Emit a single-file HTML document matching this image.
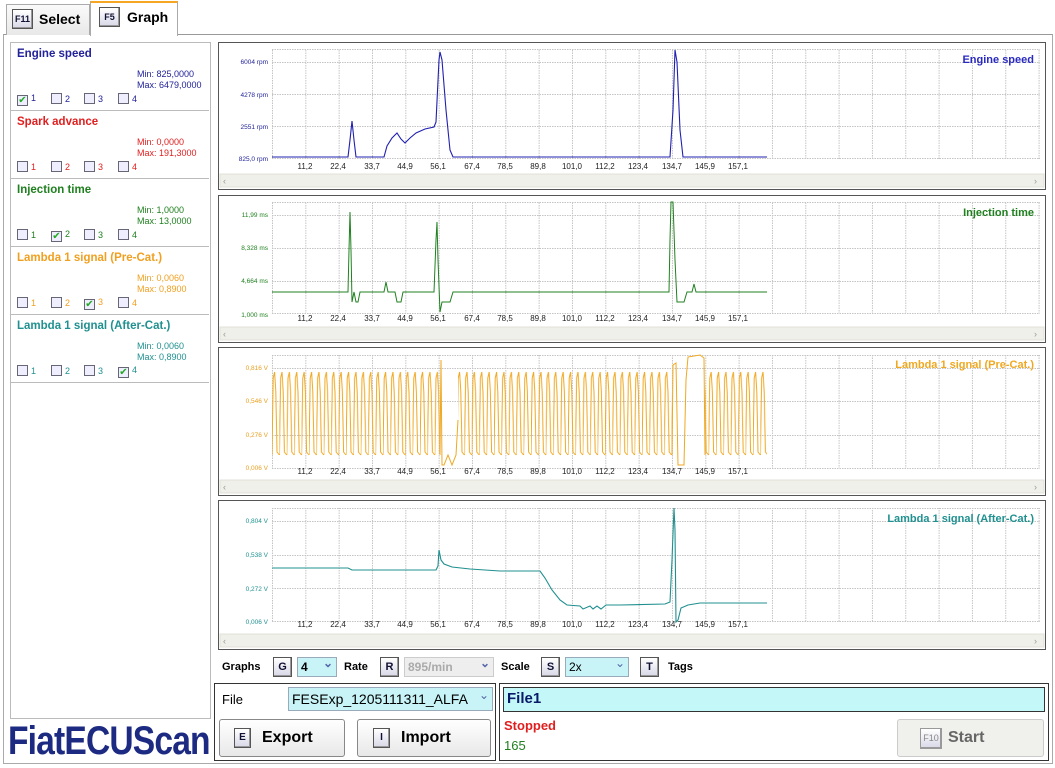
<!DOCTYPE html>
<html><head><meta charset="utf-8"><style>
*{box-sizing:border-box;margin:0;padding:0}
body{width:1055px;height:768px;background:#fff;font-family:"Liberation Sans",sans-serif;position:relative;overflow:hidden}
.a{position:absolute}
.key{position:absolute;border:1px solid #555;background:linear-gradient(#fff,#d8d8e8);box-shadow:inset -1px -1px 0 #999;font-weight:bold;font-size:10px;text-align:center;color:#113}
.sec{position:absolute;left:11px;width:198px;height:68px;border-bottom:1px solid #bbb}
.sec .t{position:absolute;left:6px;top:5px;font-weight:bold;font-size:11.5px}
.sec .m{position:absolute;left:126px;top:26px;font-size:9px;line-height:11px}
.cb{position:absolute;top:50px;font-size:9px}
.cb i{display:inline-block;width:11px;height:11px;border:1px solid #667;background:#eef;vertical-align:-2px;margin-right:3px;font-style:normal;font-size:10px;line-height:9px;color:#2a2;text-align:center}
.btn{position:absolute;border:1px solid #888;border-radius:3px;background:linear-gradient(#fff,#e8e8e8);font-weight:bold;font-size:16px}
.sel{position:absolute;background:#c8f4f8;border:1px solid #9ab;font-size:12px;padding-left:3px;line-height:19px}
.sel:after{content:"⌄";position:absolute;right:3px;top:-4px;color:#56a;font-size:12px}
.lab{position:absolute;font-size:11px;font-weight:bold}
</style></head><body>
<div class="a" style="left:3px;top:34px;width:1050px;height:730px;border:1px solid #aaa;border-top:1px solid #999"></div>
<div class="a" style="left:6px;top:4px;width:84px;height:31px;border:1px solid #aaa;border-bottom:none;background:linear-gradient(#fafafa,#e8e8e8)"></div>
<div class="key" style="left:12px;top:9px;width:21px;height:20px;line-height:18px;font-size:9px">F11</div>
<div class="a" style="left:39px;top:11px;font-weight:bold;font-size:14px">Select</div>
<div class="a" style="left:90px;top:1px;width:88px;height:35px;border:1px solid #aaa;border-top:2px solid #f5a623;border-bottom:none;background:#fff"></div>
<div class="key" style="left:99px;top:7px;width:21px;height:20px;line-height:18px;font-size:9px">F5</div>
<div class="a" style="left:127px;top:9px;font-weight:bold;font-size:14px">Graph</div>
<div class="a" style="left:10px;top:42px;width:201px;height:677px;border:1px solid #bbb"></div>
<div class="sec" style="top:43px;color:#22229a"><div class="t">Engine speed</div><div class="m">Min: 825,0000<br>Max: 6479,0000</div>
<div class="cb" style="left:6px"><i>✔</i>1</div><div class="cb" style="left:40px"><i></i>2</div><div class="cb" style="left:73px"><i></i>3</div><div class="cb" style="left:107px"><i></i>4</div></div>
<div class="sec" style="top:111px;color:#e02020"><div class="t">Spark advance</div><div class="m">Min: 0,0000<br>Max: 191,3000</div>
<div class="cb" style="left:6px"><i></i>1</div><div class="cb" style="left:40px"><i></i>2</div><div class="cb" style="left:73px"><i></i>3</div><div class="cb" style="left:107px"><i></i>4</div></div>
<div class="sec" style="top:179px;color:#208020"><div class="t">Injection time</div><div class="m">Min: 1,0000<br>Max: 13,0000</div>
<div class="cb" style="left:6px"><i></i>1</div><div class="cb" style="left:40px"><i>✔</i>2</div><div class="cb" style="left:73px"><i></i>3</div><div class="cb" style="left:107px"><i></i>4</div></div>
<div class="sec" style="top:247px;color:#f0a020"><div class="t">Lambda 1 signal (Pre-Cat.)</div><div class="m">Min: 0,0060<br>Max: 0,8900</div>
<div class="cb" style="left:6px"><i></i>1</div><div class="cb" style="left:40px"><i></i>2</div><div class="cb" style="left:73px"><i>✔</i>3</div><div class="cb" style="left:107px"><i></i>4</div></div>
<div class="sec" style="top:315px;color:#209090"><div class="t">Lambda 1 signal (After-Cat.)</div><div class="m">Min: 0,0060<br>Max: 0,8900</div>
<div class="cb" style="left:6px"><i></i>1</div><div class="cb" style="left:40px"><i></i>2</div><div class="cb" style="left:73px"><i></i>3</div><div class="cb" style="left:107px"><i>✔</i>4</div></div>
<div class="a" style="left:8px;top:719px;font-weight:bold;font-size:40px;color:#1c2a82;letter-spacing:-1px;transform:scaleX(0.84);transform-origin:left;white-space:nowrap">FiatECUScan</div>

<svg class="a" style="left:0;top:0" width="1055" height="768" font-family="Liberation Sans" font-size="8">
<defs>
<pattern id="g" patternUnits="userSpaceOnUse" x="272" y="0" width="33.33" height="768"><path d="M0.5 0V768" stroke="#c4c4c4" stroke-dasharray="1.5 1" fill="none"/></pattern>
<pattern id="osc" patternUnits="userSpaceOnUse" x="272" y="0" width="7.4" height="768"><polyline points="0,455 1.2,378 2.6,372 3.8,392 5,452 7.4,455" fill="none" stroke="#f0a820" stroke-width="1"/></pattern>
</defs>
<g fill="none" stroke="#555">
<rect x="218.5" y="42.5" width="827" height="147"/>
<rect x="218.5" y="195.5" width="827" height="147"/>
<rect x="218.5" y="347.5" width="827" height="148"/>
<rect x="218.5" y="500.5" width="827" height="149"/>
</g>
<rect x="272" y="49" width="768" height="110" fill="url(#g)"/>
<rect x="272" y="202" width="768" height="111" fill="url(#g)"/>
<rect x="272" y="355" width="768" height="113" fill="url(#g)"/>
<rect x="272" y="508" width="768" height="114" fill="url(#g)"/>
<path fill="none" stroke="#c4c4c4" stroke-dasharray="1.5 1" d="M272 49.5H1040M272 62.5H1040M272 94.5H1040M272 126.5H1040M272 158.5H1040M272 202.5H1040M272 215.5H1040M272 248.5H1040M272 281.5H1040M272 313.5H1040M272 355.5H1040M272 368.5H1040M272 401.5H1040M272 435.5H1040M272 468.5H1040M272 508.5H1040M272 521.5H1040M272 555.5H1040M272 588.5H1040M272 621.5H1040"/>
<g fill="#f0f0ea" stroke="#e0e0d8">
<rect x="220" y="174" width="824" height="13"/><rect x="220" y="327" width="824" height="13"/><rect x="220" y="480" width="824" height="13"/><rect x="220" y="634" width="824" height="13"/>
</g>
<g fill="#999" font-size="9"><text x="223" y="184">‹</text><text x="1034" y="184">›</text><text x="223" y="337">‹</text><text x="1034" y="337">›</text><text x="223" y="490">‹</text><text x="1034" y="490">›</text><text x="223" y="644">‹</text><text x="1034" y="644">›</text></g>
<g font-size="8" text-anchor="middle" fill="#222">
<g id="xl"><text x="305" y="169">11,2</text><text x="338" y="169">22,4</text><text x="372" y="169">33,7</text><text x="405" y="169">44,9</text><text x="438" y="169">56,1</text><text x="472" y="169">67,4</text><text x="505" y="169">78,5</text><text x="538" y="169">89,8</text><text x="572" y="169">101,0</text><text x="605" y="169">112,2</text><text x="638" y="169">123,4</text><text x="672" y="169">134,7</text><text x="705" y="169">145,9</text><text x="738" y="169">157,1</text></g>
<use href="#xl" y="152"/><use href="#xl" y="305"/><use href="#xl" y="458"/>
</g>
<g font-size="6.5" text-anchor="end">
<g fill="#22229a"><text x="268" y="64">6004 rpm</text><text x="268" y="97">4278 rpm</text><text x="268" y="129">2551 rpm</text><text x="268" y="161">825,0 rpm</text></g>
<g fill="#208020"><text x="268" y="217">11,99 ms</text><text x="268" y="250">8,328 ms</text><text x="268" y="283">4,664 ms</text><text x="268" y="317">1,000 ms</text></g>
<g fill="#e8a020"><text x="268" y="370">0,816 V</text><text x="268" y="403">0,546 V</text><text x="268" y="437">0,276 V</text><text x="268" y="470">0,006 V</text></g>
<g fill="#209090"><text x="268" y="523">0,804 V</text><text x="268" y="557">0,538 V</text><text x="268" y="591">0,272 V</text><text x="268" y="624">0,006 V</text></g>
</g>
<g font-size="11" font-weight="bold" text-anchor="end">
<text x="1034" y="63" fill="#2a2ac0">Engine speed</text>
<text x="1034" y="216" fill="#208020">Injection time</text>
<text x="1034" y="368" fill="#f0a820">Lambda 1 signal (Pre-Cat.)</text>
<text x="1034" y="522" fill="#209090">Lambda 1 signal (After-Cat.)</text>
</g>
<polyline fill="none" stroke="#2020b0" stroke-width="1.1" points="272,157 348,157 350,140 352,121 354,140 356,157 384,157 387,146 392,138 397,133 401,139 405,143 410,138 416,133 425,129 434,127 436,122 439,60 440,52 442,60 446,110 450,150 453,157 670,157 673,110 675,50 677,62 680,130 683,157 767,157"/>
<polyline fill="none" stroke="#208020" stroke-width="1" points="272,292 348,292 349,250 350,212 351,250 352,302 354,292 356,302 358,302 360,292 384,292 386,282 388,292 395,292 397,302 401,302 403,292 434,292 436,240 437,222 438,260 440,312 442,302 450,302 453,292 669,292 670,240 671,202 673,202 675,260 677,302 684,302 687,292 692,292 694,284 696,292 767,292"/>
<rect x="272" y="360" width="168" height="110" fill="url(#osc)"/>
<rect x="458" y="360" width="214" height="110" fill="url(#osc)"/>
<rect x="705" y="360" width="62" height="110" fill="url(#osc)"/>
<polyline fill="none" stroke="#f0a820" points="440,455 441,360 442,465 444,465 448,455 452,465 456,455 458,420"/>
<polyline fill="none" stroke="#f0a820" points="672,455 673,365 676,363 678,465 684,465 686,380 688,357 700,355 704,358 705,455"/>
<polyline fill="none" stroke="#208f8f" stroke-width="1.1" points="272,568 348,568 352,570 436,570 438,566 439,550 441,560 444,564 452,567 470,569 500,571 540,571 545,578 552,590 560,600 567,605 580,606 583,609 590,606 593,609 597,606 601,609 606,605 620,605 665,604 670,602 672,560 674,508 675,530 676,622 678,620 681,608 688,605 700,603 767,603"/>
</svg>

<div class="lab" style="left:222px;top:661px">Graphs</div>
<div class="key" style="left:273px;top:657px;width:19px;height:20px;line-height:18px;font-size:11px">G</div>
<div class="sel" style="left:297px;top:657px;width:40px;height:20px;font-weight:bold">4</div>
<div class="lab" style="left:344px;top:661px">Rate</div>
<div class="key" style="left:380px;top:657px;width:19px;height:20px;line-height:18px;font-size:11px">R</div>
<div class="sel" style="left:404px;top:657px;width:90px;height:20px;background:#eee;color:#aaa;border-color:#ccc;font-weight:bold">895/min</div>
<div class="lab" style="left:501px;top:661px">Scale</div>
<div class="key" style="left:541px;top:657px;width:19px;height:20px;line-height:18px;font-size:11px">S</div>
<div class="sel" style="left:565px;top:657px;width:64px;height:20px">2x</div>
<div class="key" style="left:640px;top:657px;width:19px;height:20px;line-height:18px;font-size:11px">T</div>
<div class="lab" style="left:668px;top:661px">Tags</div>

<div class="a" style="left:214px;top:683px;width:282px;height:78px;border:1px solid #333"></div>
<div class="a" style="left:222px;top:692px;font-size:13px">File</div>
<div class="sel" style="left:288px;top:687px;width:205px;height:24px;font-size:14px;line-height:22px">FESExp_1205111311_ALFA</div>
<div class="btn" style="left:219px;top:719px;width:126px;height:38px"><div class="key" style="left:14px;top:8px;width:17px;height:20px;line-height:18px">E</div><span class="a" style="left:42px;top:9px">Export</span></div>
<div class="btn" style="left:357px;top:719px;width:134px;height:38px"><div class="key" style="left:15px;top:8px;width:17px;height:20px;line-height:18px">I</div><span class="a" style="left:43px;top:9px">Import</span></div>

<div class="a" style="left:499px;top:683px;width:550px;height:78px;border:1px solid #333"></div>
<div class="a" style="left:503px;top:687px;width:542px;height:25px;border:1px solid #333;background:#c4f8f8;color:#0a1a6a;font-weight:bold;font-size:15px;padding:2px 3px">File1</div>
<div class="a" style="left:504px;top:718px;color:#e02020;font-weight:bold;font-size:13px">Stopped</div>
<div class="a" style="left:504px;top:738px;color:#208020;font-size:13px">165</div>
<div class="btn" style="left:897px;top:719px;width:147px;height:38px;background:#f0f0ec;border-color:#ccc;color:#666"><div class="key" style="left:22px;top:8px;width:22px;height:21px;line-height:19px;font-size:9px;color:#888;border-color:#999;font-weight:normal">F10</div><span class="a" style="left:50px;top:9px">Start</span></div>
</body></html>
